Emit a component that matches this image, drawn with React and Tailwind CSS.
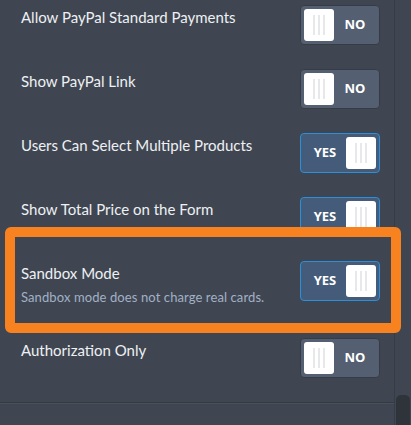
import React from "react";

const rows = [
  { id: 1, label: "Allow PayPal Standard Payments", on: false },
  { id: 2, label: "Show PayPal Link", on: false },
  { id: 3, label: "Users Can Select Multiple Products", on: true },
  { id: 4, label: "Show Total Price on the Form", on: true },
  { id: 5, label: "Sandbox Mode", hint: "Sandbox mode does not charge real cards.", on: true },
  { id: 6, label: "Authorization Only", on: false },
];

function Knob() {
  return (
    <span className="flex h-[32px] w-[30px] shrink-0 items-center justify-center gap-[3px] rounded-[3px] bg-white">
      <span className="h-[20px] w-[2px] bg-[#e6e8ea]" />
      <span className="h-[20px] w-[2px] bg-[#e6e8ea]" />
      <span className="h-[20px] w-[2px] bg-[#e6e8ea]" />
    </span>
  );
}

function Toggle({ on }) {
  return (
    <div
      className={`flex h-[40px] w-[80px] shrink-0 items-center rounded-[4px] border p-[3px] ${
        on ? "border-[#2b90d9] bg-[#445b79]" : "border-[#363c46] bg-[#545f71]"
      }`}
      style={{ fontFamily: '"Open Sans", sans-serif' }}
    >
      {on ? (
        <>
          <span className="flex-1 text-center text-[13px] font-bold text-white">YES</span>
          <Knob />
        </>
      ) : (
        <>
          <Knob />
          <span className="flex-1 text-center text-[13px] font-bold text-white">NO</span>
        </>
      )}
    </div>
  );
}

export default function App() {
  return (
    <div
      className="relative flex h-[425px] w-[411px] overflow-hidden bg-[#3f4651]"
      style={{ fontFamily: 'Lato, "Open Sans", sans-serif' }}
    >
      <div className="flex w-[395px] shrink-0 flex-col border-r border-[#363c45]">
        <div className="flex flex-col pt-[5px]">
          {rows.map((row) => (
            <div key={row.id} className="flex items-start justify-between pb-6 pl-[21px] pr-[14px]">
              <div className={`flex flex-col pt-[2px] ${row.hint ? "pb-[9px]" : ""}`}>
                <span className="text-[15px] leading-[20px] text-[#eef0f3]">{row.label}</span>
                {row.hint && (
                  <span className="mt-[6px] text-[13px] leading-[16px] tracking-[0.1px] text-[#a2b1c6]">{row.hint}</span>
                )}
              </div>
              <Toggle on={row.on} />
            </div>
          ))}
        </div>
        <div className="border-b border-[#343a42]" />
        <div className="border-b border-[#485059]" />
        <div className="flex-1" />
      </div>
      <div className="flex flex-1 flex-col justify-end">
        <div className="mx-auto h-[30px] w-[14px] rounded-t-[5px] bg-[#2f343b]" />
      </div>

      {/* highlight box */}
      <div className="absolute left-[5px] top-[227px] h-[106px] w-[396px] rounded-[6px] border-[10px] border-[#f8821f]" />
    </div>
  );
}
